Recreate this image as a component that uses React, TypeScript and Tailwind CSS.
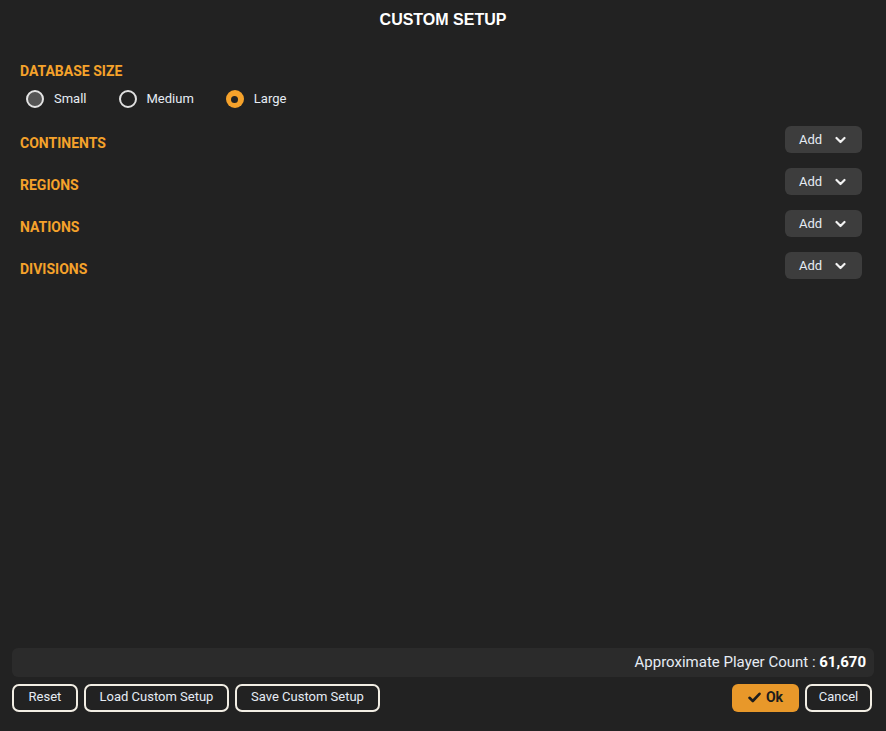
import React from "react";

const font = { fontFamily: "Roboto, 'Liberation Sans', sans-serif" };

function Chevron() {
  return (
    <svg width="11" height="8" viewBox="0 0 11 8" className="ml-[13px]">
      <path d="M1.5 2 L5.5 6 L9.5 2" stroke="#f2f2f2" strokeWidth="2.2" fill="none" strokeLinecap="round" strokeLinejoin="round" />
    </svg>
  );
}

function Row({ label }: { label: string }) {
  return (
    <div className="flex items-center justify-between h-[27px]">
      <div className="pt-[8px] text-[14px] font-bold text-[#f5a22b]">{label}</div>
      <div className="w-[77px] h-[27px] rounded-[6px] bg-[#3d3d3d] flex items-start pt-[4px] pl-[14px] text-[13px] text-[#e6ecf4]">
        <span>Add</span>
        <span className="mt-[6px]"><Chevron /></span>
      </div>
    </div>
  );
}

function Radio({ kind, label }: { kind: "gray" | "empty" | "on"; label: string }) {
  return (
    <div className="flex items-center gap-[10px]">
      {kind === "gray" && (
        <div className="w-[18px] h-[18px] rounded-full border-2 border-[#e4e4e4] bg-[#555555]" />
      )}
      {kind === "empty" && (
        <div className="w-[18px] h-[18px] rounded-full border-2 border-[#e0e0e0]" />
      )}
      {kind === "on" && (
        <div className="w-[18px] h-[18px] rounded-full bg-[#f5a22b] flex items-center justify-center">
          <div className="w-[7px] h-[7px] rounded-full bg-[#222222]" />
        </div>
      )}
      <span className="text-[13px] text-[#e6ecf4]">{label}</span>
    </div>
  );
}

function OutlineBtn({ label, w }: { label: string; w: string }) {
  return (
    <div className={`${w} h-[28px] rounded-[7px] border-2 border-[#f2eee4] flex items-center justify-center text-[13px] text-[#e6ecf4] pb-[2px]`}>
      {label}
    </div>
  );
}

export default function App() {
  return (
    <div className="w-[886px] h-[731px] bg-[#222222] flex flex-col" style={font}>
      <div className="h-[40px] flex items-center justify-center text-[16px] font-bold text-white font-['Liberation_Sans',sans-serif]">
        CUSTOM SETUP
      </div>
      <div className="px-5 pt-[23px] flex flex-col">
        <div className="text-[14px] font-bold text-[#f5a22b] leading-[17px]">DATABASE SIZE</div>
        <div className="mt-[9px] h-[20px] pl-[6px] flex items-center gap-[32px]">
          <Radio kind="gray" label="Small" />
          <Radio kind="empty" label="Medium" />
          <Radio kind="on" label="Large" />
        </div>
        <div className="mt-[17px] pr-[4px] flex flex-col gap-[15px]">
          <Row label="CONTINENTS" />
          <Row label="REGIONS" />
          <Row label="NATIONS" />
          <Row label="DIVISIONS" />
        </div>
      </div>
      <div className="flex-1" />
      <div className="mx-3 h-[29px] rounded-[6px] bg-[#2b2b2b] flex items-center justify-end pr-[8px] text-[15px] text-[#e6ecf4]">
        <span>Approximate Player Count :&nbsp;</span>
        <span className="font-bold text-white">61,670</span>
      </div>
      <div className="mt-[7px] mb-[19px] px-3 flex items-center justify-between">
        <div className="flex items-center gap-[6px]">
          <OutlineBtn label="Reset" w="w-[66px]" />
          <OutlineBtn label="Load Custom Setup" w="w-[145px]" />
          <OutlineBtn label="Save Custom Setup" w="w-[145px]" />
        </div>
        <div className="flex items-center gap-[6px] mr-[2px]">
          <div className="w-[67px] h-[28px] rounded-[6px] bg-[#e8982a] flex items-center justify-center gap-[5px] text-[14px] font-bold text-[#1c1c1c] pb-[1px]">
            <svg width="13" height="11" viewBox="0 0 13 11">
              <path d="M1.5 5.8 L4.8 9 L11.5 1.8" stroke="#1c1c1c" strokeWidth="2.6" fill="none" strokeLinecap="round" strokeLinejoin="round" />
            </svg>
            <span>Ok</span>
          </div>
          <OutlineBtn label="Cancel" w="w-[67px]" />
        </div>
      </div>
    </div>
  );
}
